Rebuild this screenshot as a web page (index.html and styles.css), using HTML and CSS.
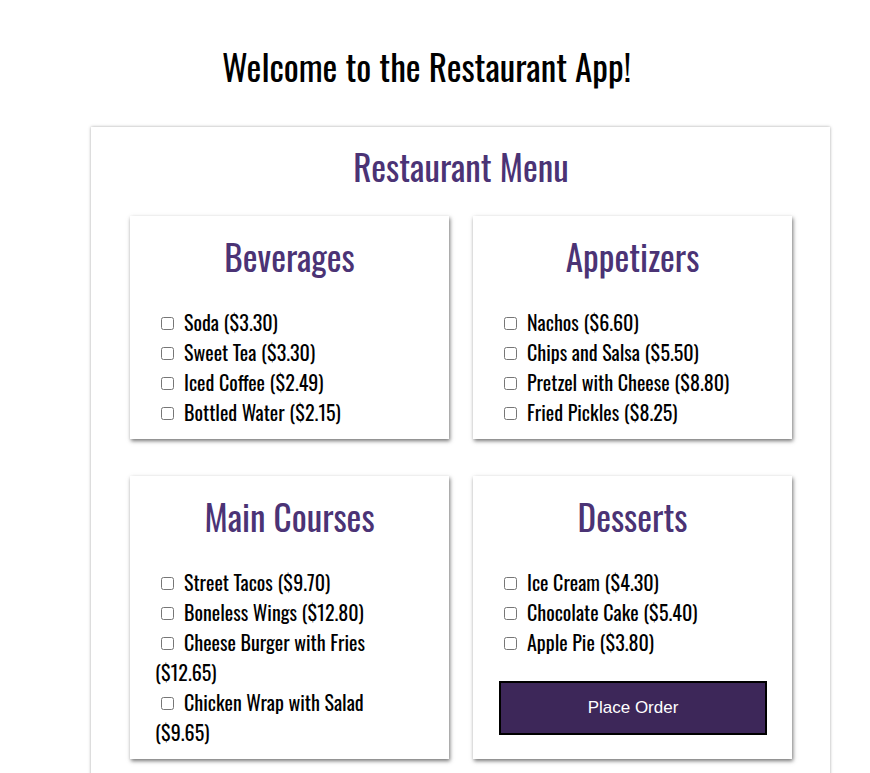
FILE: index.html
```html
<!DOCTYPE html>
<html lang="en">
<head>
<meta charset="utf-8">
<title>Restaurant App</title>
<link rel="stylesheet" href="styles.css">
</head>
<body>
<h1 class="title">Welcome to the Restaurant App!</h1>
<main class="menu">
  <h2 class="menu-title">Restaurant Menu</h2>
  <div class="grid">
    <section class="category">
      <h3 class="cat-title">Beverages</h3>
      <ul class="items">
        <li><input type="checkbox" class="check">Soda ($3.30)</li>
        <li><input type="checkbox" class="check">Sweet Tea ($3.30)</li>
        <li><input type="checkbox" class="check">Iced Coffee ($2.49)</li>
        <li><input type="checkbox" class="check">Bottled Water ($2.15)</li>
      </ul>
    </section>
    <section class="category">
      <h3 class="cat-title">Appetizers</h3>
      <ul class="items">
        <li><input type="checkbox" class="check">Nachos ($6.60)</li>
        <li><input type="checkbox" class="check">Chips and Salsa ($5.50)</li>
        <li><input type="checkbox" class="check">Pretzel with Cheese ($8.80)</li>
        <li><input type="checkbox" class="check">Fried Pickles ($8.25)</li>
      </ul>
    </section>
    <section class="category">
      <h3 class="cat-title">Main Courses</h3>
      <ul class="items">
        <li><input type="checkbox" class="check">Street Tacos ($9.70)</li>
        <li><input type="checkbox" class="check">Boneless Wings ($12.80)</li>
        <li><input type="checkbox" class="check">Cheese Burger with Fries ($12.65)</li>
        <li><input type="checkbox" class="check">Chicken Wrap with Salad ($9.65)</li>
      </ul>
    </section>
    <section class="category">
      <h3 class="cat-title">Desserts</h3>
      <ul class="items">
        <li><input type="checkbox" class="check">Ice Cream ($4.30)</li>
        <li><input type="checkbox" class="check">Chocolate Cake ($5.40)</li>
        <li><input type="checkbox" class="check">Apple Pie ($3.80)</li>
      </ul>
      <button class="order-btn" type="button">Place Order</button>
    </section>
  </div>
</main>
</body>
</html>
```
FILE: styles.css
```css
html, body {
  margin: 0;
  padding: 0;
  background: #fff;
}

body {
  font-family: "Oswald", "Liberation Sans", sans-serif;
  color: #000;
}

.title {
  margin: 44px 0 0 0;
  padding-right: 17px;
  font-size: 35.2px;
  line-height: 44px;
  font-weight: 400;
  text-align: center;
}

.menu {
  margin: 39px 0 0 91px;
  width: 739px;
  box-sizing: border-box;
  padding: 17px 38px 40px 39px;
  box-shadow: 0 0 3px rgba(0, 0, 0, 0.35);
  background: #fff;
}

.menu-title {
  margin: 0;
  font-size: 35.2px;
  line-height: 44px;
  font-weight: 400;
  text-align: center;
  color: #4b3375;
}

.grid {
  margin-top: 28px;
  display: grid;
  grid-template-columns: 1fr 1fr;
  column-gap: 24px;
  row-gap: 37px;
}

.category {
  background: #fff;
  box-shadow: 1px 2px 4px rgba(0, 0, 0, 0.55);
  padding: 18px 0 12px 0;
}

.cat-title {
  margin: 0;
  font-size: 35.2px;
  line-height: 44px;
  font-weight: 400;
  text-align: center;
  color: #4b3375;
}

.items {
  list-style: none;
  margin: 29px 0 0 0;
  padding: 0 30px 0 25px;
}

.items li {
  font-size: 20px;
  line-height: 30px;
}

.check {
  width: 13px;
  height: 13px;
  margin: 0 10px 0 6px;
  vertical-align: 1px;
}

.order-btn {
  display: block;
  box-sizing: border-box;
  margin: 24px 25px 0 26px;
  width: calc(100% - 51px);
  height: 54px;
  background: #3d2759;
  color: #fff;
  border: 2px solid #000;
  font-family: "Liberation Sans", Arial, sans-serif;
  font-size: 17px;
  cursor: pointer;
}
```
